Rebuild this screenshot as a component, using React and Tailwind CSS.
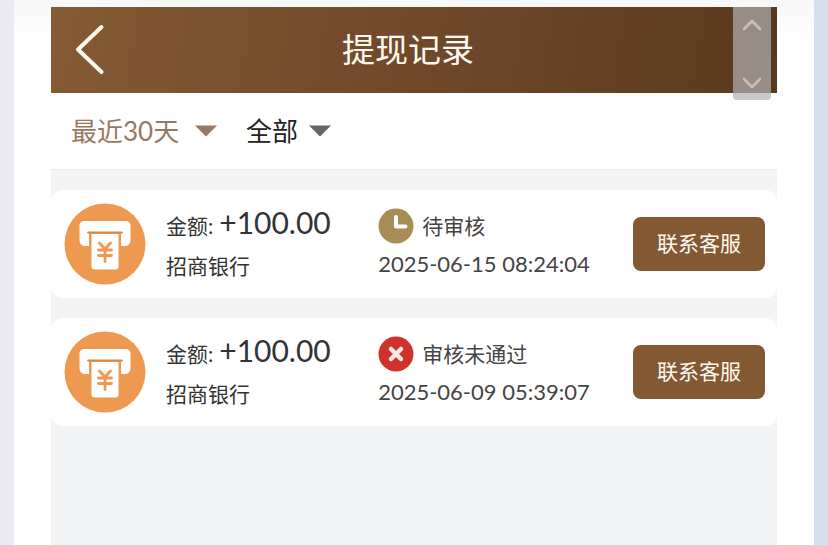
import React from 'react';

const records = [
  { id: 1, amount: '+100.00', bank: '招商银行', status: 'pending', label: '待审核', time: '2025-06-15 08:24:04' },
  { id: 2, amount: '+100.00', bank: '招商银行', status: 'rejected', label: '审核未通过', time: '2025-06-09 05:39:07' },
];

function WithdrawIcon() {
  return (
    <svg viewBox="0 0 82 82" className="w-full" aria-hidden="true">
      <circle cx="41" cy="41" r="40.500" fill="#ed9950" />
      <path d="M20 18h42a4.500 4.500 0 0 1 4.500 4.500v15a5.500 5.500 0 0 1-5.500 5.500h-4V29H25v14h-4a5.500 5.500 0 0 1-5.500-5.500v-15A4.500 4.500 0 0 1 20 18Z" fill="#fff" />
      <path d="M24 29.500h34" stroke="#dc8640" strokeWidth="1.800" strokeLinecap="round" />
      <path d="M27.500 31h27v32.500a3 3 0 0 1-3 3h-21a3 3 0 0 1-3-3Z" fill="#fff" />
      <path d="M35.500 40l5.500 6 5.500-6M34.500 47h13M34.500 52.500h13M41 46.500v12" fill="none" stroke="#ed9950" strokeWidth="2.800" strokeLinecap="round" strokeLinejoin="round" />
    </svg>
  );
}

function StatusIcon({ status }) {
  if (status === 'pending') {
    return (
      <svg viewBox="0 0 36 36" className="size-9 shrink-0" aria-hidden="true">
        <circle cx="18" cy="18" r="17.500" fill="#a68d55" />
        <path d="M18 9v9.500h9.500" fill="none" stroke="#fff" strokeWidth="4" strokeLinecap="round" strokeLinejoin="round" />
      </svg>
    );
  }
  return (
    <svg viewBox="0 0 36 36" className="size-9 shrink-0" aria-hidden="true">
      <circle cx="18" cy="18" r="17.500" fill="#cf322b" />
      <path d="M13 13l10 10M23 13l-10 10" stroke="#fbe9e6" strokeWidth="4.500" strokeLinecap="round" />
    </svg>
  );
}

function Filter({ label, options, className, arrow }) {
  return (
    <label className={`flex items-center justify-between gap-2.5 ${className}`}>
      <select aria-label={label} className="appearance-none bg-transparent text-[26px] leading-9 outline-none [field-sizing:content]">
        {options.map((o) => (
          <option key={o}>{o}</option>
        ))}
      </select>
      <svg viewBox="0 0 24 12" className="h-3 w-6" aria-hidden="true">
        <path d="M1 0.500h22L12 11.500Z" fill={arrow} />
      </svg>
    </label>
  );
}

function RecordCard({ record }) {
  return (
    <li className="grid grid-cols-[82px_9fr_11fr_132px] items-center gap-5 rounded-xl bg-white py-3 pr-3 pl-[13px]">
      <WithdrawIcon />
      <div className="whitespace-nowrap text-[#333]">
        <p className="flex items-baseline gap-1.5 leading-10">
          <span className="text-[21px]">金额:</span>
          <span className="text-[30px]">{record.amount}</span>
        </p>
        <p className="text-[21px] leading-10">{record.bank}</p>
      </div>
      <div className="whitespace-nowrap text-[#444]">
        <p className="flex items-center gap-2 text-[21px] leading-10">
          <StatusIcon status={record.status} />
          {record.label}
        </p>
        <p className="text-[22px] leading-9">{record.time}</p>
      </div>
      <button type="button" className="h-[54px] rounded-lg bg-[#835934] pb-0.5 text-[21px] text-[#fffaf0]">
        联系客服
      </button>
    </li>
  );
}

export default function App() {
  return (
    <div className="flex min-h-screen bg-linear-to-r from-[#e9eaf4] to-[#d5dfee] px-[14px] font-['Lato','Noto_Sans_CJK_SC',sans-serif]">
      <div className="flex flex-1 flex-col bg-white bg-linear-to-b from-[#f7f7f7] to-white to-[40px] px-[37px] pt-[7px]">
        <main className="relative flex flex-1 flex-col bg-[#f3f4f6]">
          <header className="flex h-[86px] items-center bg-linear-100 from-[#855a34] via-[#70492a] to-[#59391e] px-5">
            <button type="button" aria-label="返回" className="w-10">
              <svg viewBox="0 0 40 56" className="h-14 w-10" aria-hidden="true">
                <path d="M30.500 5L7 27.500L30.500 50" fill="none" stroke="#fffaf0" strokeWidth="4" strokeLinecap="round" strokeLinejoin="round" />
              </svg>
            </button>
            <h1 className="flex-1 pr-[52px] pb-0.5 text-center text-[33px] leading-12 text-[#fffaf0]">提现记录</h1>
          </header>

          <div className="flex h-[77px] items-center gap-7 border-b border-[#ebebec] bg-white px-5">
            <Filter label="时间范围" options={['最近30天']} className="min-w-[147px] text-[#967964]" arrow="#967964" />
            <Filter label="状态" options={['全部']} className="text-[#222]" arrow="#666" />
          </div>

          <ul className="flex flex-col gap-5 pt-5">
            {records.map((r) => (
              <RecordCard key={r.id} record={r} />
            ))}
          </ul>

          <div className="absolute top-0 right-1.5 flex h-[93px] w-[38px] flex-col items-center justify-between rounded-b bg-[rgb(178,176,178)]/70 py-2.5">
            <button type="button" aria-label="向上">
              <svg viewBox="0 0 20 14" className="h-3.5 w-5" aria-hidden="true">
                <path d="M2 12l8-8 8 8" fill="none" stroke="#c9bfb5" strokeWidth="2.600" strokeLinecap="round" strokeLinejoin="round" />
              </svg>
            </button>
            <button type="button" aria-label="向下">
              <svg viewBox="0 0 20 14" className="h-3.5 w-5" aria-hidden="true">
                <path d="M2 3l8 8 8-8" fill="none" stroke="#c9bfb5" strokeWidth="2.600" strokeLinecap="round" strokeLinejoin="round" />
              </svg>
            </button>
          </div>
        </main>
      </div>
    </div>
  );
}
